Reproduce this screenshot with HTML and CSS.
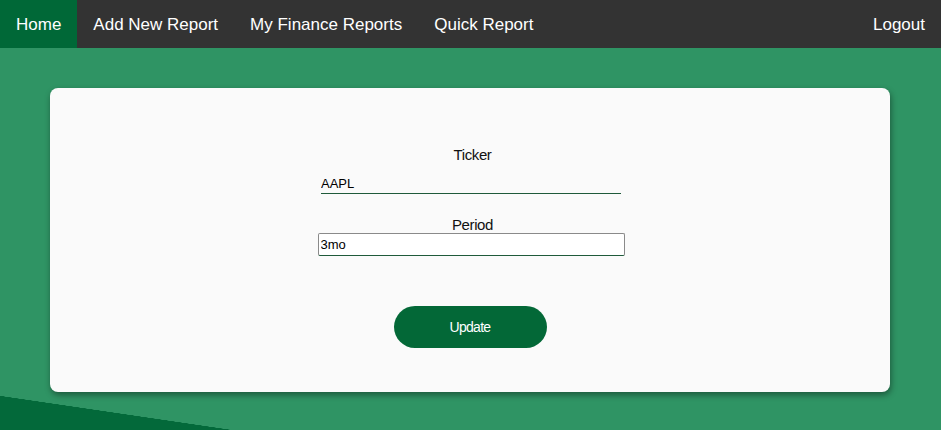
FILE: index.html
```html
<!DOCTYPE html>
<html lang="en">
<head>
<meta charset="utf-8">
<title>Finance Reports</title>
<link rel="stylesheet" href="styles.css">
</head>
<body>
<nav class="topnav">
  <a class="nav-link active" href="#">Home</a>
  <a class="nav-link" href="#">Add New Report</a>
  <a class="nav-link" href="#">My Finance Reports</a>
  <a class="nav-link" href="#">Quick Report</a>
  <a class="nav-link logout" href="#">Logout</a>
</nav>
<main class="page">
  <section class="card">
    <form class="form">
      <label class="field-label" for="ticker">Ticker</label>
      <input class="line-input" id="ticker" type="text" value="AAPL">
      <label class="field-label period-label" for="period">Period</label>
      <input class="box-input" id="period" type="text" value="3mo">
      <button class="update-btn" type="button">Update</button>
    </form>
  </section>
</main>
</body>
</html>
```
FILE: styles.css
```css
html, body {
  margin: 0;
  padding: 0;
}
body {
  min-height: 100vh;
  background-color: #2f9464;
  background-image: linear-gradient(to top right, #03693a 50%, transparent 50.5%);
  background-repeat: no-repeat;
  background-position: left bottom;
  background-size: 231px 34px;
  font-family: "Liberation Sans", Arial, sans-serif;
  overflow: hidden;
}
.topnav {
  display: flex;
  height: 48px;
  box-sizing: border-box;
  padding-top: 2px;
  background: #333333;
}
.nav-link {
  display: flex;
  align-items: center;
  padding: 0 16px;
  margin-top: -2px;
  padding-top: 2px;
  color: #ffffff;
  text-decoration: none;
  font-size: 17px;
}
.nav-link.active {
  background: #006837;
}
.nav-link.logout {
  margin-left: auto;
}
.page {
  padding: 40px 51px 0 50px;
}
.card {
  background: #fafafa;
  border-radius: 8px;
  box-shadow: 1px 3px 6px rgba(0, 0, 0, 0.4);
  padding: 58px 0 44px;
}
.form {
  display: flex;
  flex-direction: column;
  align-items: center;
}
.field-label {
  padding-left: 5px;
  font-size: 15px;
  letter-spacing: -0.4px;
  line-height: 17px;
  color: #111;
}
.period-label {
  margin-top: 22px;
}
.line-input {
  margin-top: 11px;
  margin-left: 2px;
  width: 300px;
  height: 19px;
  box-sizing: content-box;
  padding: 0;
  border: none;
  border-bottom: 1px solid #1f5a3a;
  background: transparent;
  font-family: "Liberation Sans", Arial, sans-serif;
  font-size: 13px;
  color: #000;
  outline: none;
}
.box-input {
  margin-left: 2px;
  width: 307px;
  height: 23px;
  box-sizing: border-box;
  padding: 0 2px;
  border: 1px solid #8a8a8a;
  border-bottom: 1px solid #1f5a3a;
  border-radius: 2px;
  background: #fff;
  font-family: "Liberation Sans", Arial, sans-serif;
  font-size: 13px;
  color: #000;
  outline: none;
}
.update-btn {
  margin-top: 50px;
  width: 153px;
  height: 42px;
  border: none;
  border-radius: 21px;
  background: #036837;
  color: #ffffff;
  font-family: "Liberation Sans", Arial, sans-serif;
  font-size: 14px;
  letter-spacing: -0.7px;
  cursor: pointer;
}
```
